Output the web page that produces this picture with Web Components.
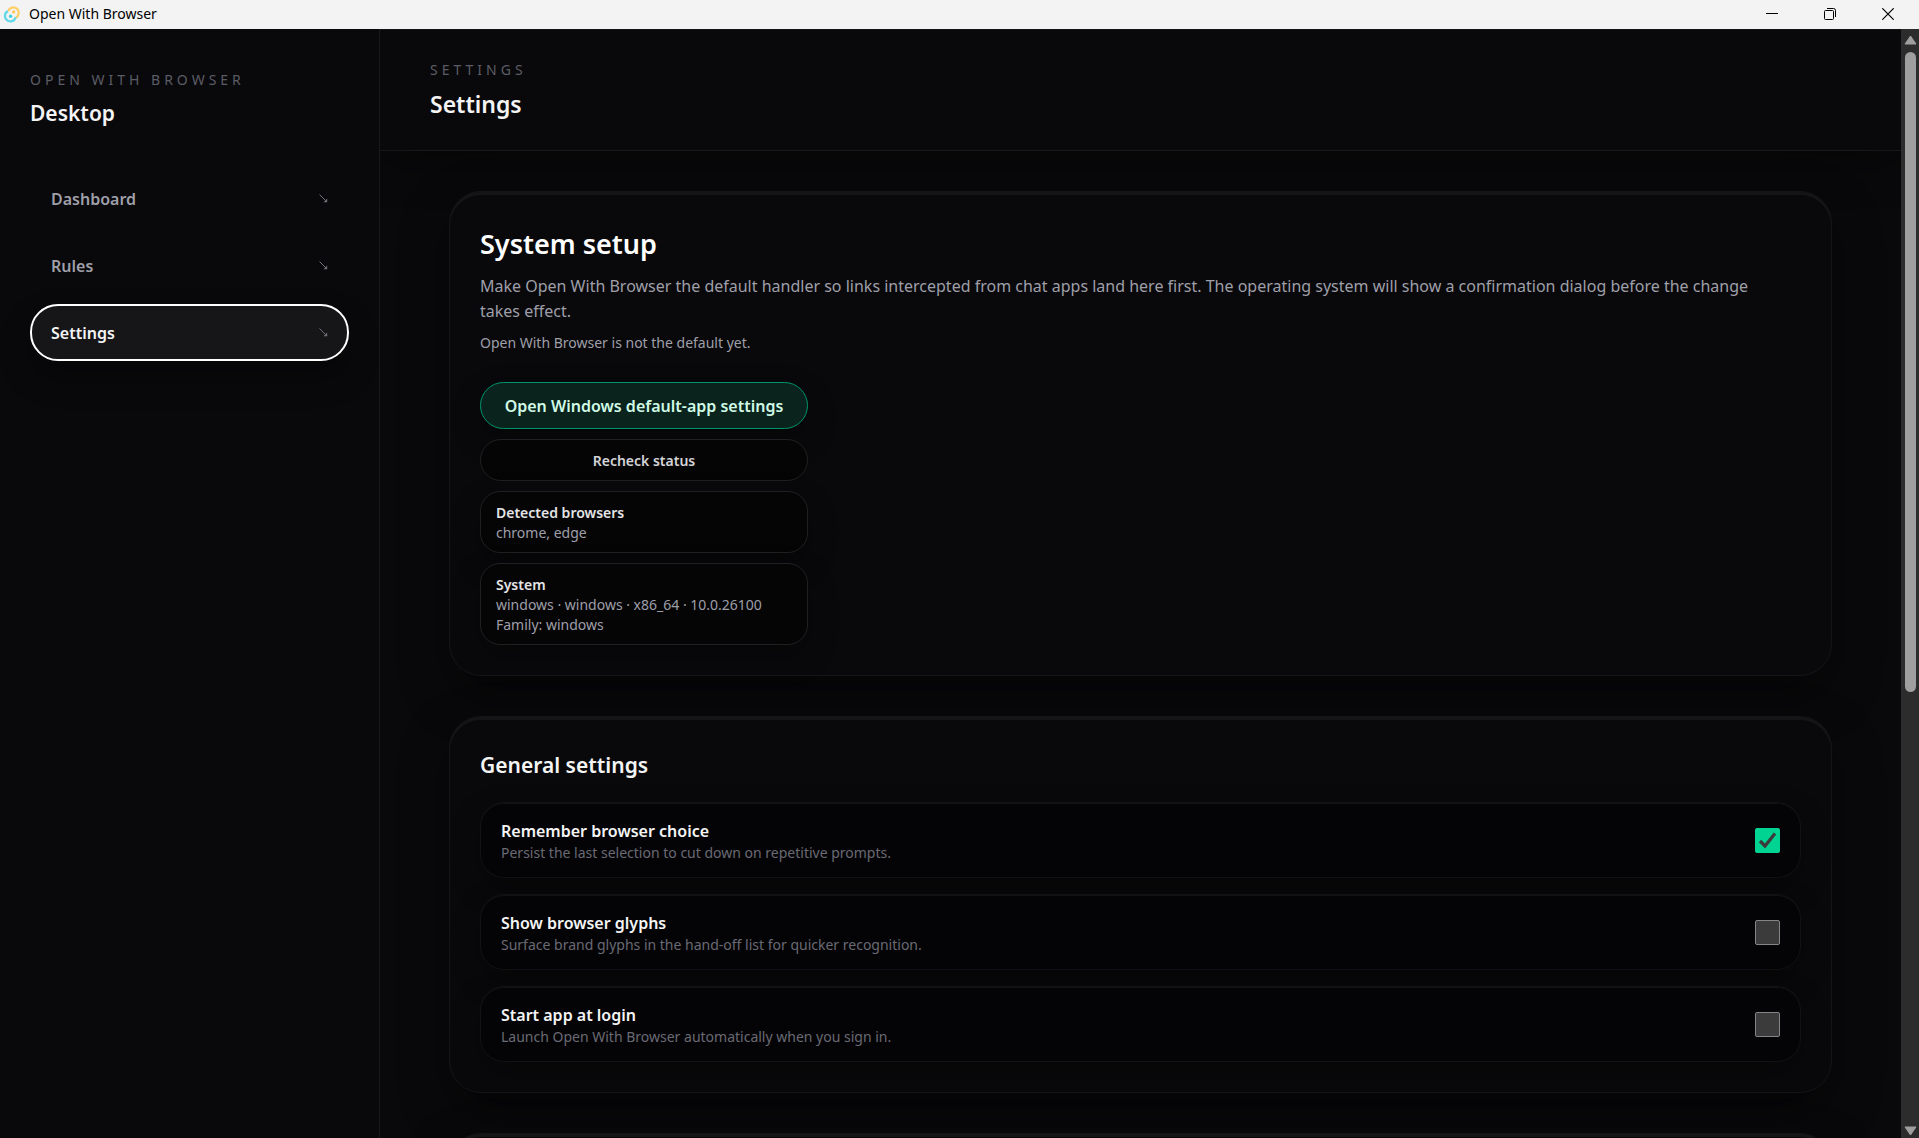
<!DOCTYPE html>
<html lang="en">
<head>
<meta charset="utf-8">
<title>Open With Browser</title>
<style>
  html, body { height: 100%; margin: 0; }
  body { background: #09090b; color: #f4f4f5; font-family: "Noto Sans", "Open Sans", sans-serif; font-size: 14px; overflow: hidden; }
</style>
</head>
<body>
<app-window>
  <title-bar slot="title">Open With Browser</title-bar>
  <app-sidebar slot="sidebar" eyebrow="Open With Browser" heading="Desktop">
    <nav-item>Dashboard</nav-item>
    <nav-item>Rules</nav-item>
    <nav-item active>Settings</nav-item>
  </app-sidebar>
  <page-header slot="header" eyebrow="Settings">Settings</page-header>
  <setup-panel></setup-panel>
  <settings-panel heading="General settings">
    <toggle-row name="Remember browser choice" hint="Persist the last selection to cut down on repetitive prompts." checked></toggle-row>
    <toggle-row name="Show browser glyphs" hint="Surface brand glyphs in the hand-off list for quicker recognition."></toggle-row>
    <toggle-row name="Start app at login" hint="Launch Open With Browser automatically when you sign in."></toggle-row>
  </settings-panel>
  <settings-panel></settings-panel>
  <scroll-rail slot="rail"></scroll-rail>
</app-window>

<script>
const RESET = ':host,*{box-sizing:border-box}h1,h2,p{margin:0}button,input{font:inherit;margin:0}';

function define(name, render) {
  customElements.define(name, class extends HTMLElement {
    constructor() {
      super();
      this.attachShadow({ mode: 'open' });
    }
    connectedCallback() {
      this.shadowRoot.innerHTML = '<style>' + RESET + '</style>' + render(this);
    }
  });
}

define('app-window', () => `
<style>
  :host { display: flex; flex-direction: column; height: 100vh; overflow: hidden; }
  .body { flex: 1; min-height: 0; display: flex; }
  .view { flex: 1; min-width: 0; overflow: hidden; border-left: 1px solid #18181a; }
  main { display: flex; flex-direction: column; gap: 40px; padding: 40px 69px; }
</style>
<slot name="title"></slot>
<div class="body">
  <slot name="sidebar"></slot>
  <div class="view">
    <slot name="header"></slot>
    <main><slot></slot></main>
  </div>
  <slot name="rail"></slot>
</div>`);

define('title-bar', () => `
<style>
  :host { display: flex; align-items: center; height: 29px; flex: none; padding: 0 2px 1px 3px; background: #f3f3f3; color: #000; font-size: 14px; line-height: 20px; }
  .logo { width: 18px; height: 18px; margin-right: 8px; }
  .name { flex: 1; }
  button { display: grid; place-items: center; width: 58px; height: 28px; padding: 0; border: 0; background: none; color: #000; }
</style>
<svg class="logo" viewBox="0 0 18 18" fill="none" aria-hidden="true">
  <path d="M5.2 6.2A5.4 5.4 0 1 1 12.8 12.6" stroke="#ffcf66" stroke-width="2.3"/>
  <circle cx="10.6" cy="6.9" r="1.7" fill="#ffc85a"/>
  <path d="M12.6 12.2A5.4 5.4 0 1 1 5 6.1" stroke="#5fd8e8" stroke-width="2.3"/>
  <circle cx="7.6" cy="11.3" r="1.7" fill="#3fcfe0"/>
</svg>
<span class="name"><slot></slot></span>
<button aria-label="Minimize"><svg width="12" height="12" viewBox="0 0 12 12"><path d="M0 5.5h12" stroke="#000"/></svg></button>
<button aria-label="Restore"><svg width="12" height="12" viewBox="0 0 12 12" fill="none" stroke="#000"><rect x=".5" y="2.5" width="9" height="9" rx="1"/><path d="M3 .5h6.500a2 2 0 0 1 2 2V9"/></svg></button>
<button aria-label="Close"><svg width="12" height="12" viewBox="0 0 12 12"><path d="M.3.3l11.400 11.400M11.700.3L.3 11.700" stroke="#000" stroke-width="1.200"/></svg></button>`);

define('app-sidebar', el => `
<style>
  :host { display: block; flex: none; width: 379px; padding: 41px 30px 0; }
  .eyebrow { color: #5c5c66; font-size: 14px; line-height: 20px; letter-spacing: 4px; text-transform: uppercase; }
  .heading { margin-top: 8px; font-size: 21px; line-height: 30px; font-weight: 600; color: #f4f4f5; }
  nav { display: flex; flex-direction: column; gap: 10px; margin-top: 42px; }
</style>
<p class="eyebrow">${el.getAttribute('eyebrow')}</p>
<p class="heading">${el.getAttribute('heading')}</p>
<nav><slot></slot></nav>`);

define('nav-item', el => `
<style>
  :host { display: block; }
  a { display: flex; align-items: center; justify-content: space-between; height: 57px; padding: 0 19px; border: 2px solid transparent; border-radius: 28px; color: #9f9fa9; font-size: 16px; line-height: 24px; font-weight: 600; text-decoration: none; }
  :host([active]) a { border-color: #fff; background: #161618; color: #f4f4f5; box-shadow: 0 16px 30px rgba(0, 0, 0, .35); }
  svg { width: 9px; height: 9px; color: #71717b; }
</style>
<a href="#"${el.hasAttribute('active') ? ' aria-current="page"' : ''}><slot></slot>
<svg viewBox="0 0 9 9" aria-hidden="true"><path d="M.5.5l6 6" stroke="currentColor"/><path d="M8.200 4.500v3.700H4.500z" fill="currentColor"/></svg></a>`);

define('page-header', el => `
<style>
  :host { display: block; padding: 30px 50px; border-top: 1px solid #131315; border-bottom: 1px solid #18181a; background: #09090b; box-shadow: 0 16px 40px rgba(0, 0, 0, .3); }
  .eyebrow { color: #5c5c66; font-size: 14px; line-height: 20px; letter-spacing: 4px; text-transform: uppercase; }
  h1 { margin-top: 8px; font-size: 23px; line-height: 32px; font-weight: 600; }
</style>
<p class="eyebrow">${el.getAttribute('eyebrow')}</p>
<h1><slot></slot></h1>`);

const PANEL = `
  :host { display: block; padding: 30px; border: 1px solid #151517; border-radius: 32px; background: #09090b;
    box-shadow: inset 0 3px 0 #151517, 0 20px 50px rgba(0, 0, 0, .4); }`;

define('setup-panel', () => `
<style>
  ${PANEL}
  h2 { font-size: 27px; line-height: 44px; font-weight: 600; color: #fff; }
  .lead { margin-top: 8px; padding-right: 20px; color: #9f9fa9; font-size: 16px; line-height: 25px; }
  .state { margin-top: 8px; color: #9f9fa9; line-height: 22px; }
  .stack { display: flex; flex-direction: column; gap: 10px; width: 328px; margin-top: 28px; }
  button { border-radius: 24px; text-align: center; cursor: pointer; }
  .primary { height: 47px; padding: 0; border: 1px solid #00956a; background: #0a231d; color: #d0fae5; font-size: 16px; font-weight: 600; box-shadow: 0 12px 30px rgba(0, 0, 0, .3); }
  .secondary { height: 42px; padding: 0; border: 1px solid #202022; background: #050506; color: #d4d4d8; font-size: 14px; font-weight: 600; }
</style>
<h2>System setup</h2>
<p class="lead">Make Open With Browser the default handler so links intercepted from chat apps land here first. The operating system will show a confirmation dialog before the change takes effect.</p>
<p class="state">Open With Browser is not the default yet.</p>
<div class="stack">
  <button class="primary">Open Windows default-app settings</button>
  <button class="secondary">Recheck status</button>
  <info-card heading="Detected browsers"><div>chrome, edge</div></info-card>
  <info-card heading="System"><div>windows · windows · x86_64 · 10.0.26100</div><div>Family: windows</div></info-card>
</div>`);

define('info-card', el => `
<style>
  :host { display: block; padding: 11px 15px 9px; border: 1px solid #202022; border-radius: 20px; background: #050506; color: #9f9fa9; line-height: 20px; box-shadow: 0 12px 30px rgba(0, 0, 0, .3); }
  p { color: #e4e4e7; font-weight: 600; }
</style>
<p>${el.getAttribute('heading')}</p><slot></slot>`);

define('settings-panel', el => `
<style>
  ${PANEL}
  h2 { margin-bottom: 18px; min-height: 37px; font-size: 21px; line-height: 37px; font-weight: 600; }
  .rows { display: flex; flex-direction: column; gap: 16px; }
</style>
<h2>${el.getAttribute('heading') || ''}</h2>
<div class="rows"><slot></slot></div>`);

define('toggle-row', el => `
<style>
  :host { display: block; }
  label { display: flex; align-items: center; justify-content: space-between; height: 76px; padding: 0 20px; border: 1px solid #121214; border-radius: 24px; background: #040406; box-shadow: inset 0 1px 0 #121214, 0 12px 30px rgba(0, 0, 0, .3); }
  .name { display: block; color: #f4f4f5; font-size: 16px; line-height: 26px; font-weight: 600; }
  .hint { display: block; color: #6a6a74; line-height: 18px; }
  input { appearance: none; width: 25px; height: 25px; border: 1px solid #858585; border-radius: 2px; background: #3b3b3b; }
  input:checked { border-color: #00d492; background: #00d492; }
  .box { display: grid; }
  .box > * { grid-area: 1 / 1; }
  svg { width: 25px; height: 25px; pointer-events: none; }
</style>
<label>
  <span><span class="name">${el.getAttribute('name')}</span><span class="hint">${el.getAttribute('hint')}</span></span>
  <span class="box"><input type="checkbox"${el.hasAttribute('checked') ? ' checked' : ''}>
  ${el.hasAttribute('checked') ? '<svg viewBox="0 0 25 25" fill="none" aria-hidden="true"><path d="M5 13l5 5L20 5.500" stroke="#3b3b3b" stroke-width="3.200"/></svg>' : ''}</span>
</label>`);

define('scroll-rail', () => `
<style>
  :host { display: flex; flex-direction: column; align-items: center; flex: none; width: 18px; padding: 6px 0 2px; background: #2c2c2c; }
  svg { flex: none; width: 13px; height: 10px; }
  .track { flex: 1; display: flex; flex-direction: column; width: 11px; padding: 7px 0 8px; }
  .thumb { height: 60%; border-radius: 6px; background: #9f9f9f; }
</style>
<svg viewBox="0 0 13 10"><path d="M6.500 1L12 9H1z" fill="#9f9f9f" stroke="#9f9f9f" stroke-linejoin="round"/></svg>
<div class="track"><div class="thumb"></div></div>
<svg viewBox="0 0 13 10"><path d="M6.500 9L12 1H1z" fill="#9f9f9f" stroke="#9f9f9f" stroke-linejoin="round"/></svg>`);
</script>
</body>
</html>
